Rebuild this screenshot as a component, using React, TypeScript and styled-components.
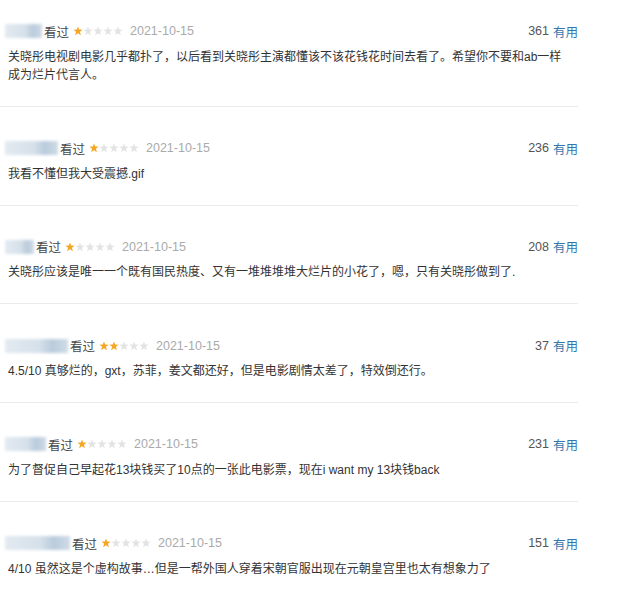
import React from "react";
import styled, { createGlobalStyle } from "styled-components";

const Global = createGlobalStyle`
  html, body { margin: 0; padding: 0; background: #fff; }
  body { font-family: "Liberation Sans", "Noto Sans CJK SC", sans-serif; }
`;

const List = styled.div`
  width: 578px;
  padding-top: 21px;
`;

const Item = styled.div`
  padding: 0 0 22px 8px;
  border-bottom: 1px solid #eaeaea;
  & + & { padding-top: 31px; }
`;

const Header = styled.div`
  display: flex;
  align-items: center;
  height: 20.75px;
  font-size: 12.5px;
`;

const Who = styled.div`
  display: flex;
  align-items: center;
  flex: 1;
`;

const Blur = styled.span<{ $w: number }>`
  display: inline-block;
  width: ${(p) => p.$w}px;
  height: 14px;
  margin-left: -3px;
  background: linear-gradient(90deg, #e3eaf1 0%, #d5e0ea 55%, #b9cbdc 75%, #cfdbe6 100%);
  filter: blur(1.5px);
`;

const Seen = styled.span`
  color: #494949;
  margin-left: 2px;
`;

const Stars = styled.span`
  display: inline-flex;
  margin-left: 4px;
`;

const DateText = styled.span`
  color: #aaa;
  margin-left: 7px;
`;

const Votes = styled.span`
  color: #555;
`;

const Useful = styled.span`
  color: #37a;
  margin-left: 4px;
`;

const Content = styled.p`
  margin: 6px 0 0;
  padding-right: 6px;
  font-size: 12px;
  line-height: 18px;
  color: #333;
`;

const Star = ({ on }: { on: boolean }) => (
  <svg width="10" height="10" viewBox="0 0 10 10">
    <polygon
      points="5,0.4 6.2,3.6 9.6,3.7 6.9,5.8 7.9,9.2 5,7.2 2.1,9.2 3.1,5.8 0.4,3.7 3.8,3.6"
      fill={on ? "#f6a623" : "#e3e3e3"}
    />
  </svg>
);

const reviews = [
  { w: 37, stars: 1, votes: 361, text: "关晓彤电视剧电影几乎都扑了，以后看到关晓彤主演都懂该不该花钱花时间去看了。希望你不要和ab一样成为烂片代言人。" },
  { w: 53, stars: 1, votes: 236, text: "我看不懂但我大受震撼.gif" },
  { w: 29, stars: 1, votes: 208, text: "关晓彤应该是唯一一个既有国民热度、又有一堆堆堆堆大烂片的小花了，嗯，只有关晓彤做到了." },
  { w: 63, stars: 2, votes: 37, text: "4.5/10 真够烂的，gxt，苏菲，姜文都还好，但是电影剧情太差了，特效倒还行。" },
  { w: 41, stars: 1, votes: 231, text: "为了督促自己早起花13块钱买了10点的一张此电影票，现在i want my 13块钱back" },
  { w: 65, stars: 1, votes: 151, text: "4/10 虽然这是个虚构故事…但是一帮外国人穿着宋朝官服出现在元朝皇宫里也太有想象力了" },
];

export default function App() {
  return (
    <>
      <Global />
      <List>
        {reviews.map((r, i) => (
          <Item key={i}>
            <Header>
              <Who>
                <Blur $w={r.w} />
                <Seen>看过</Seen>
                <Stars>
                  {[0, 1, 2, 3, 4].map((k) => (
                    <Star key={k} on={k < r.stars} />
                  ))}
                </Stars>
                <DateText>2021-10-15</DateText>
              </Who>
              <Votes>{r.votes}</Votes>
              <Useful>有用</Useful>
            </Header>
            <Content>{r.text}</Content>
          </Item>
        ))}
      </List>
    </>
  );
}
